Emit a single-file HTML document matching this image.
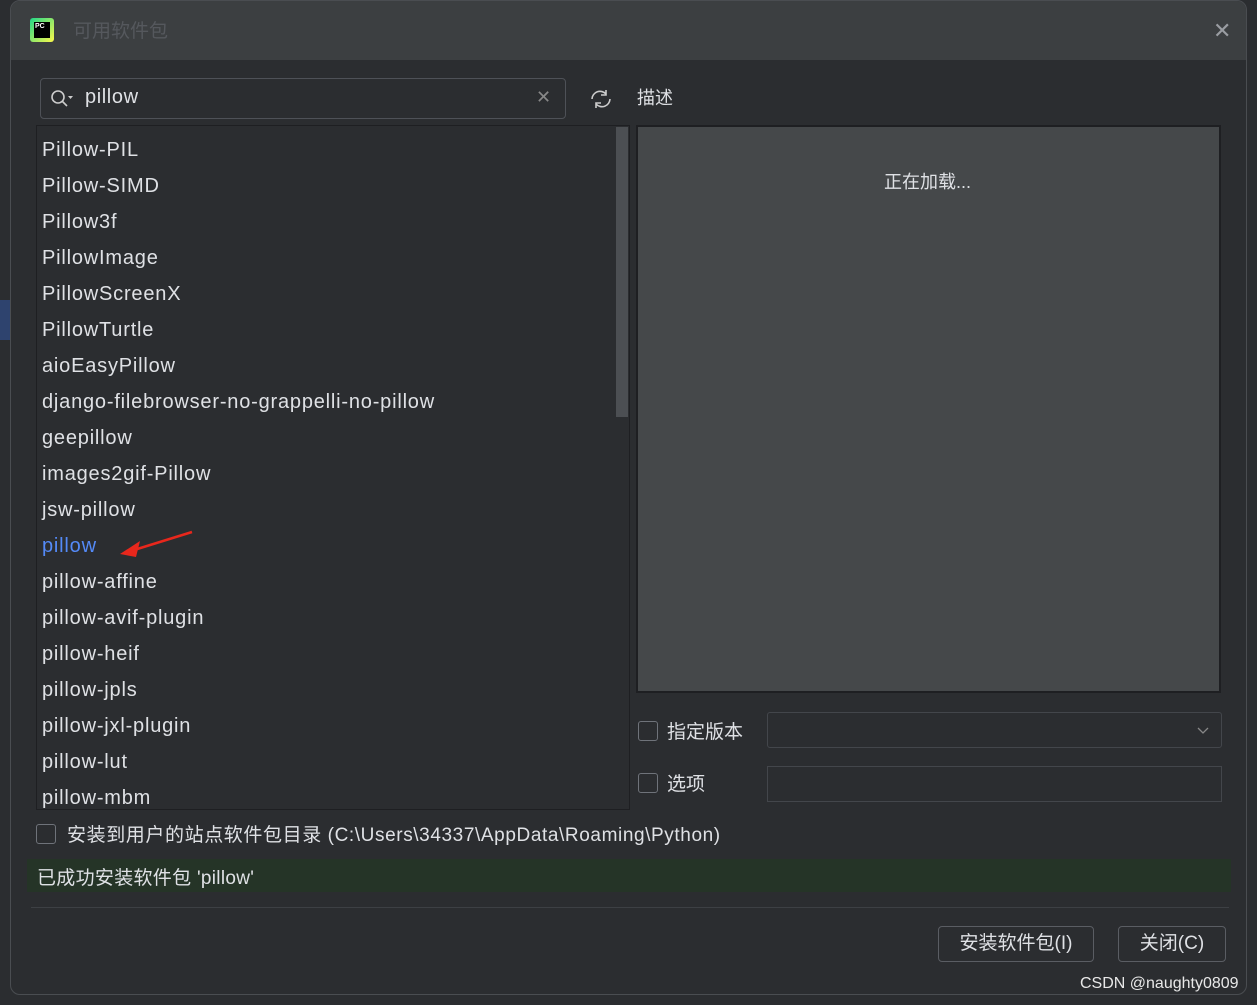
<!DOCTYPE html>
<html><head><meta charset="utf-8"><style>
*{margin:0;padding:0;box-sizing:border-box}
body{width:1257px;height:1005px;background:#2b2d30;position:relative;overflow:hidden;font-family:"Liberation Sans","Noto Sans CJK SC",sans-serif;color:#dfe1e5}
.a{position:absolute}
.dlg{left:10px;top:0;width:1237px;height:995px;background:#2b2d30;border:1px solid #4a4d51;border-radius:10px;overflow:hidden}
.title{left:0;top:0;width:100%;height:59px;background:#3c3f41}
.row{position:absolute;left:5px;font-size:20px;letter-spacing:0.8px;color:#dfe1e5;white-space:nowrap}
.cb{width:20px;height:20px;border:1px solid #6f737a;border-radius:3px}
.btn{border:1px solid #5a5d63;border-radius:4px;height:36px;font-size:19px;text-align:center;line-height:34px;color:#dfe1e5}
</style></head><body>
<div class="a" style="left:0;top:300px;width:10px;height:40px;background:#2e436e"></div>
<div class="a dlg">
 <div class="a title"></div>
 <div class="a" style="left:19px;top:17px;width:24px;height:24px;background:linear-gradient(135deg,#21d789,#fcf84a);border-radius:3px"></div>
 <div class="a" style="left:23px;top:21px;width:16px;height:16px;background:#000;color:#fff;font-size:7px;font-weight:bold;padding:1px">PC</div>
 <div class="a" style="left:62px;top:15px;font-size:19px;color:#55585d">可用软件包</div>
 <div class="a" style="left:1202px;top:19px;font-size:22px;color:#9a9da2;line-height:22px">✕</div>
 <div class="a" style="left:29px;top:77px;width:526px;height:41px;border:1px solid #4e5157;border-radius:4px"></div>
 <svg class="a" style="left:38px;top:86px" width="30" height="24" viewBox="0 0 30 24"><circle cx="9" cy="10" r="6" fill="none" stroke="#ccc" stroke-width="1.6"/><path d="M13 14l5 5" stroke="#ccc" stroke-width="1.6"/><path d="M19 9h5l-2.5 3z" fill="#ccc"/></svg>
 <div class="a" style="left:74px;top:85px;font-size:20px;letter-spacing:0.6px">pillow</div>
 <div class="a" style="left:525px;top:86px;font-size:18px;color:#888">✕</div>
 <svg class="a" style="left:577px;top:86px" width="26" height="24" viewBox="0 0 26 24"><path d="M4 12a8 8 0 0 1 14-5M22 12a8 8 0 0 1-14 5" fill="none" stroke="#ccc" stroke-width="1.6"/><path d="M18 3v5h-5M8 21v-5h5" fill="none" stroke="#ccc" stroke-width="1.6"/></svg>
 <div class="a" style="left:25px;top:124px;width:594px;height:685px;border:1px solid #1e1f22;background:#2b2d30;overflow:hidden">
  <div class="a" style="left:579px;top:1px;width:12px;height:290px;background:#4c4f53"></div>
  <div class="row" style="top:13px">Pillow-PIL</div>
  <div class="row" style="top:49px">Pillow-SIMD</div>
  <div class="row" style="top:85px">Pillow3f</div>
  <div class="row" style="top:121px">PillowImage</div>
  <div class="row" style="top:157px">PillowScreenX</div>
  <div class="row" style="top:193px">PillowTurtle</div>
  <div class="row" style="top:229px">aioEasyPillow</div>
  <div class="row" style="top:265px">django-filebrowser-no-grappelli-no-pillow</div>
  <div class="row" style="top:301px">geepillow</div>
  <div class="row" style="top:337px">images2gif-Pillow</div>
  <div class="row" style="top:373px">jsw-pillow</div>
  <div class="row" style="top:409px;color:#548af7">pillow</div>
  <div class="row" style="top:445px">pillow-affine</div>
  <div class="row" style="top:481px">pillow-avif-plugin</div>
  <div class="row" style="top:517px">pillow-heif</div>
  <div class="row" style="top:553px">pillow-jpls</div>
  <div class="row" style="top:589px">pillow-jxl-plugin</div>
  <div class="row" style="top:625px">pillow-lut</div>
  <div class="row" style="top:661px">pillow-mbm</div>
 </div>
 <svg class="a" style="left:105px;top:528px" width="80" height="30"><path d="M76 3L18 21" stroke="#e8271c" stroke-width="2.5"/><path d="M4 25L24 12L20 28z" fill="#e8271c"/></svg>
 <div class="a" style="left:626px;top:83px;font-size:18px">描述</div>
 <div class="a" style="left:625px;top:124px;width:585px;height:568px;background:#45484a;border:2px solid #1e1f22"></div>
 <div class="a" style="left:873px;top:167px;font-size:18px">正在加载...</div>
 <div class="a cb" style="left:627px;top:720px"></div>
 <div class="a" style="left:656px;top:716px;font-size:19px">指定版本</div>
 <div class="a" style="left:756px;top:711px;width:455px;height:36px;border:1px solid #43464b;border-radius:3px"></div>
 <svg class="a" style="left:1185px;top:724px" width="14" height="12"><path d="M2 3l5 5 5-5" fill="none" stroke="#888" stroke-width="1.3"/></svg>
 <div class="a cb" style="left:627px;top:772px"></div>
 <div class="a" style="left:656px;top:768px;font-size:19px">选项</div>
 <div class="a" style="left:756px;top:765px;width:455px;height:36px;border:1px solid #43464b"></div>
 <div class="a cb" style="left:25px;top:823px"></div>
 <div class="a" style="left:56px;top:819px;font-size:19px;letter-spacing:0.6px;white-space:nowrap">安装到用户的站点软件包目录 (C:\Users\34337\AppData\Roaming\Python)</div>
 <div class="a" style="left:16px;top:858px;width:1204px;height:33px;background:#253427"></div>
 <div class="a" style="left:26px;top:862px;font-size:19px;letter-spacing:0.3px;white-space:nowrap">已成功安装软件包 'pillow'</div>
 <div class="a" style="left:20px;top:906px;width:1198px;height:1px;background:#3d4044"></div>
 <div class="a btn" style="left:927px;top:925px;width:156px">安装软件包(I)</div>
 <div class="a btn" style="left:1107px;top:925px;width:108px">关闭(C)</div>
</div>
<div class="a" style="left:1080px;top:975px;font-size:16px;color:#e8e8e8">CSDN @naughty0809</div>
</body></html>
